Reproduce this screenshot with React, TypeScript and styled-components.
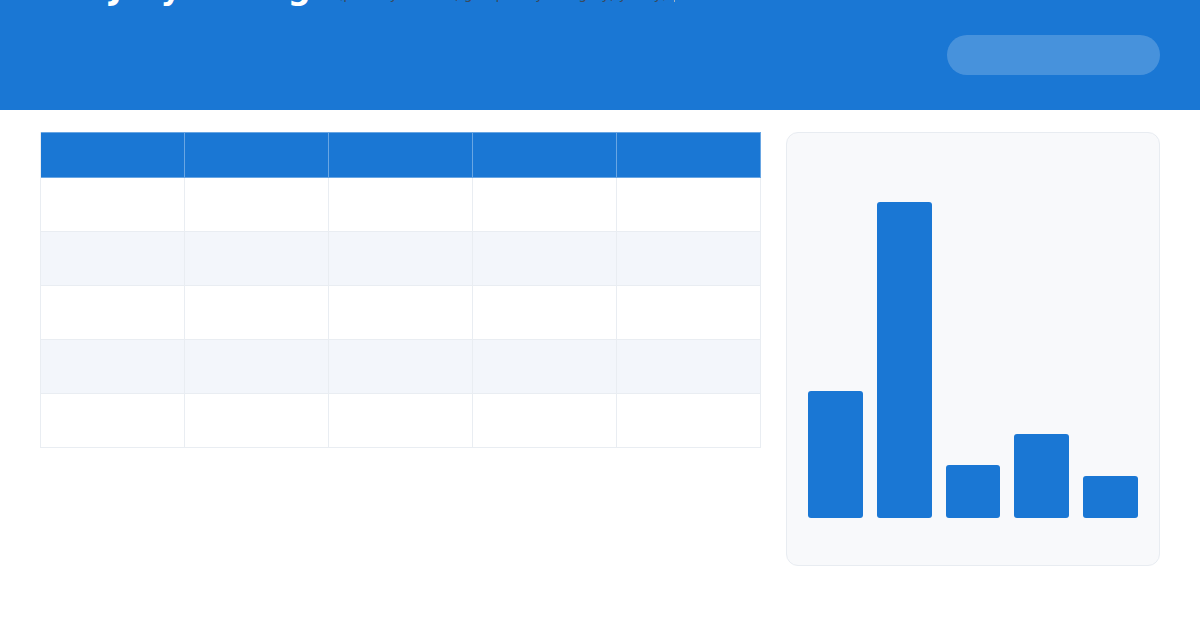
import React from "react";
import styled, { createGlobalStyle } from "styled-components";

const Global = createGlobalStyle`
  html, body { margin: 0; padding: 0; background: #ffffff; }
  body { font-family: "DejaVu Sans", "Noto Sans", sans-serif; }
  * { box-sizing: border-box; }
`;

const Page = styled.div`
  width: 1200px;
  height: 630px;
  overflow: hidden;
  background: #ffffff;
`;

const Header = styled.header`
  height: 110px;
  background: #1a77d4;
  display: flex;
  justify-content: space-between;
  align-items: center;
  padding: 0 40px 0 40px;
  overflow: hidden;
`;

const TitleBlock = styled.div`
  align-self: flex-start;
  margin-top: -31px;
  display: flex;
  align-items: baseline;
  gap: 8px;
  padding-left: 70px;
`;

const Title = styled.h1`
  margin: 0;
  font-size: 32px;
  line-height: 38px;
  font-weight: 700;
  color: #ffffff;
  white-space: nowrap;
`;

const Subtitle = styled.span`
  font-size: 14px;
  color: #3b4a5c;
  white-space: nowrap;
  padding-right: 6px;
  border-right: 1px solid #9fb3c8;
`;

const Pill = styled.div`
  width: 213px;
  height: 40px;
  border-radius: 20px;
  background: rgba(255, 255, 255, 0.2);
`;

const Main = styled.main`
  display: flex;
  align-items: flex-start;
  gap: 26px;
  padding: 22px 40px 0 40px;
`;

const Table = styled.div`
  width: 721px;
  display: grid;
  grid-template-columns: repeat(5, 144px);
  border-left: 1px solid #e9edf2;
`;

const HeadCell = styled.div`
  height: 46px;
  background: #1a77d4;
  border-right: 1px solid rgba(255, 255, 255, 0.35);
  border-top: 1px solid rgba(255, 255, 255, 0.35);
  border-bottom: 1px solid rgba(255, 255, 255, 0.35);
`;

const Cell = styled.div<{ $alt: boolean }>`
  height: 54px;
  background: ${(p) => (p.$alt ? "#f3f6fb" : "#ffffff")};
  border-right: 1px solid #e9edf2;
  border-bottom: 1px solid #e9edf2;
`;

const ChartCard = styled.section`
  width: 374px;
  height: 434px;
  margin-left: -1px;
  background: #f8f9fb;
  border: 1px solid #e8ecf1;
  border-radius: 12px;
  padding: 0 21px 47px 21px;
  display: flex;
  align-items: flex-end;
  gap: 14px;
`;

const Bar = styled.div`
  flex: 1;
  background: #1a77d4;
  border-radius: 3px;
`;

const heights = [127, 316, 53, 84, 42];

export default function App() {
  return (
    <Page>
      <Global />
      <Header>
        <TitleBlock>
          <Title>Jury Ratings</Title>
          <Subtitle>(primary metrics, grouped by category, yearly)</Subtitle>
        </TitleBlock>
        <Pill />
      </Header>
      <Main>
        <Table>
          {Array.from({ length: 5 }).map((_, i) => (
            <HeadCell key={`h${i}`} />
          ))}
          {Array.from({ length: 25 }).map((_, i) => (
            <Cell key={i} $alt={Math.floor(i / 5) % 2 === 1} />
          ))}
        </Table>
        <ChartCard>
          {heights.map((h, i) => (
            <Bar key={i} style={{ height: h }} />
          ))}
        </ChartCard>
      </Main>
    </Page>
  );
}
